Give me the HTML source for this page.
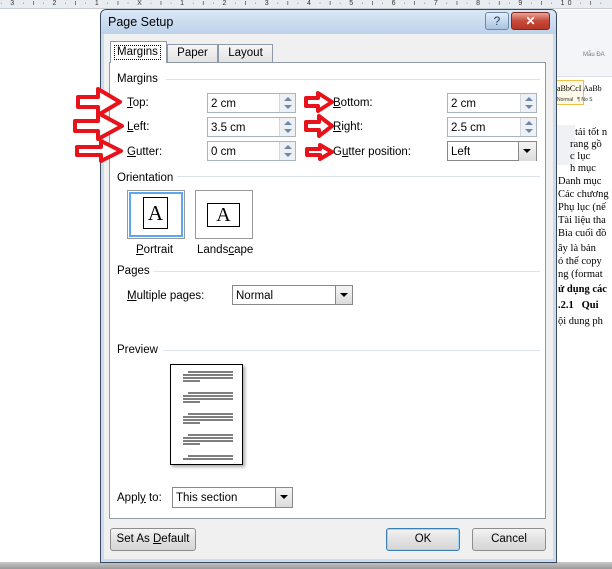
<!DOCTYPE html>
<html><head><meta charset="utf-8"><style>
*{margin:0;padding:0;box-sizing:border-box}
body{width:612px;height:569px;position:relative;overflow:hidden;background:#fff;font-family:"Liberation Sans",sans-serif;font-size:11px;color:#000}
.a{position:absolute}
.lbl{position:absolute;font-size:11.5px;line-height:14px}
.inp{position:absolute;background:#fff;border:1px solid #a9b4c2;height:20px;font-size:11.5px;line-height:19px;padding-left:3px;padding-top:1px}
.spin{position:absolute;right:0;top:0;width:16px;height:18px;background:#eef0f3;border-left:1px solid #d0d6dd}
.spin:before{content:"";position:absolute;left:4px;top:3px;border:4px solid transparent;border-bottom:4px solid #6a86a8;border-top:0}
.spin:after{content:"";position:absolute;left:4px;top:11px;border:4px solid transparent;border-top:4px solid #6a86a8;border-bottom:0}
.dd{position:absolute;right:0;top:0;width:17px;height:18px;background:linear-gradient(#f4f4f4,#dcdcdc);border-left:1px solid #888}
.dd:after{content:"";position:absolute;left:4px;top:7px;border:4px solid transparent;border-top:4px solid #000;border-bottom:0}
.sep{position:absolute;height:1px;background:#dde3ea}
.btn{position:absolute;height:23px;border:1px solid #8d8d8d;border-radius:3px;background:linear-gradient(#f4f4f4,#e2e2e2 50%,#d6d6d6);font-size:11.5px;line-height:21px;text-align:center}
.arrow{position:absolute}
u{text-decoration:underline}
.doc{position:absolute;left:558px;font-family:"Liberation Serif",serif;font-size:10.5px;white-space:nowrap;line-height:12px}
</style></head><body>
<div class="a" style="left:0;top:0;width:612px;height:9px;background:#e9edf2;border-bottom:1px solid #c7ccd3;font-size:7px;color:#333;letter-spacing:3px;white-space:nowrap;line-height:8px;overflow:hidden">· 3 · ı · 2 · ı · 1 · ı · X · ı · 1 · ı · 2 · ı · 3 · ı · 4 · ı · 5 · ı · 6 · ı · 7 · ı · 8 · ı · 9 · ı · 10 · ı ·</div>
<div class="a" style="left:557px;top:10px;width:55px;height:90px;background:#f3f5f8"></div>
<div class="a" style="left:583px;top:52px;font-size:6px;color:#777">Mẫu ĐA</div>
<div class="a" style="left:557px;top:76px;width:55px;height:32px;background:#fff;border-top:1px solid #dde"></div>
<div class="a" style="left:556px;top:80px;width:28px;height:25px;border:1px solid #f0c040;background:#fffbe8"></div>
<div class="a" style="left:557px;top:84px;font-family:'Liberation Serif',serif;font-size:8px">aBbCcI AaBb</div>
<div class="a" style="left:557px;top:97px;font-size:5px;color:#333">Normal &nbsp; ¶ No S</div>
<div class="a" style="left:557px;top:112px;width:55px;height:450px;background:#fff"></div>
<div class="a" style="left:557px;top:125px;width:18px;height:40px;background:#f0f1f4"></div>
<div class="doc" style="top:127px;left:575px">tải tốt n</div>
<div class="doc" style="top:139px;left:570px">rang gồ</div>
<div class="doc" style="top:151px;left:570px">c lục</div>
<div class="doc" style="top:163px;left:570px">h mục</div>
<div class="doc" style="top:176px">Danh mục</div>
<div class="doc" style="top:189px">Các chương</div>
<div class="doc" style="top:202px">Phụ lục (nế</div>
<div class="doc" style="top:215px">Tài liệu tha</div>
<div class="doc" style="top:228px">Bìa cuối đồ</div>
<div class="doc" style="top:243px">ây là bản</div>
<div class="doc" style="top:256px">ó thể copy</div>
<div class="doc" style="top:269px">ng (format</div>
<div class="doc" style="top:284px;font-weight:bold">ử dụng các</div>
<div class="doc" style="top:300px;font-weight:bold">.2.1 &nbsp; Qui</div>
<div class="doc" style="top:316px">ội dung ph</div>
<div class="a" style="left:0;top:562px;width:612px;height:7px;background:linear-gradient(#c8c8c8,#9a9a9a)"></div>
<div class="a" style="left:100px;top:9px;width:457px;height:554px;background:#c9dcf0;border:1px solid #3a4a5c;border-radius:6px 6px 0 0"></div>
<div class="a" style="left:101px;top:10px;width:455px;height:24px;background:linear-gradient(#dbe8f6,#bcd2ea);border-radius:5px 5px 0 0"></div>
<div class="a" style="left:108px;top:15px;font-size:12.5px">Page Setup</div>
<div class="a" style="left:485px;top:12px;width:24px;height:18px;border:1px solid #6d88a8;border-radius:3px;background:linear-gradient(#e4eef9,#a9c3e0);text-align:center;font-size:12px;line-height:16px;color:#2a3f5a">?</div>
<div class="a" style="left:511px;top:12px;width:39px;height:18px;border:1px solid #7a2c24;border-radius:3px;background:linear-gradient(#e9a496,#c6493a 50%,#b83624);text-align:center;font-size:12px;line-height:16px;color:#fff;font-weight:bold">✕</div>
<div class="a" style="left:104px;top:34px;width:449px;height:525px;background:#f0f0f0"></div>
<div class="a" style="left:109px;top:62px;width:437px;height:457px;background:#fff;border:1px solid #8e9aa8"></div>
<div class="a" style="left:110px;top:41px;width:57px;height:22px;background:#fff;border:1px solid #8e9aa8;border-bottom:none"></div>
<div class="a" style="left:114px;top:45px;border:1px dotted #000;padding:0 2px;font-size:11.5px;line-height:13px">Margins</div>
<div class="a" style="left:167px;top:44px;width:51px;height:19px;background:linear-gradient(#f6f6f6,#e2e2e2);border:1px solid #8e9aa8;text-align:center;font-size:11.5px;line-height:17px">Paper</div>
<div class="a" style="left:218px;top:44px;width:55px;height:19px;background:linear-gradient(#f6f6f6,#e2e2e2);border:1px solid #8e9aa8;text-align:center;font-size:11.5px;line-height:17px">Layout</div>
<div class="lbl" style="left:117px;top:72px">Margins</div><div class="sep" style="left:166px;top:79px;width:374px"></div>
<div class="lbl" style="left:127px;top:96px"><u>T</u>op:</div>
<div class="inp" style="left:207px;top:93px;width:89px">2 cm<div class="spin"></div></div>
<div class="lbl" style="left:127px;top:120px"><u>L</u>eft:</div>
<div class="inp" style="left:207px;top:117px;width:89px">3.5 cm<div class="spin"></div></div>
<div class="lbl" style="left:127px;top:145px"><u>G</u>utter:</div>
<div class="inp" style="left:207px;top:141px;width:89px">0 cm<div class="spin"></div></div>
<div class="lbl" style="left:333px;top:96px"><u>B</u>ottom:</div>
<div class="inp" style="left:447px;top:93px;width:90px">2 cm<div class="spin"></div></div>
<div class="lbl" style="left:333px;top:120px"><u>R</u>ight:</div>
<div class="inp" style="left:447px;top:117px;width:90px">2.5 cm<div class="spin"></div></div>
<div class="lbl" style="left:333px;top:145px">G<u>u</u>tter position:</div>
<div class="inp" style="left:447px;top:141px;width:90px;border-color:#888">Left<div class="dd" style="width:18px;height:19px"></div></div>
<div class="sep" style="left:117px;top:176px;width:423px"></div>
<div class="lbl" style="left:117px;top:171px;background:#fff;padding-right:4px">Orientation</div>
<div class="a" style="left:127px;top:190px;width:58px;height:49px;border:1px solid #999;background:#fff"><div style="position:absolute;inset:1px;border:2px solid #5aa8f0"></div>
<div style="position:absolute;left:15px;top:6px;width:25px;height:32px;border:1px solid #000;background:#fff;font-family:'Liberation Serif',serif;font-size:21px;text-align:center;line-height:30px">A</div></div>
<div class="a" style="left:195px;top:190px;width:58px;height:49px;border:1px solid #999;background:#fff">
<div style="position:absolute;left:11px;top:12px;width:33px;height:24px;border:1px solid #000;background:#fff;font-family:'Liberation Serif',serif;font-size:20px;text-align:center;line-height:22px">A</div></div>
<div class="lbl" style="left:136px;top:243px"><u>P</u>ortrait</div>
<div class="lbl" style="left:197px;top:243px">Lands<u>c</u>ape</div>
<div class="lbl" style="left:117px;top:264px">Pages</div><div class="sep" style="left:154px;top:271px;width:386px"></div>
<div class="lbl" style="left:127px;top:289px"><u>M</u>ultiple pages:</div>
<div class="inp" style="left:232px;top:285px;width:121px;border-color:#888">Normal<div class="dd"></div></div>
<div class="lbl" style="left:117px;top:343px">Preview</div><div class="sep" style="left:163px;top:350px;width:377px"></div>
<div class="a" style="left:170px;top:364px;width:73px;height:101px;border:1px solid #000;background:#fff;box-shadow:2px 2px 3px #aaa">
<svg width="71" height="99" style="position:absolute;left:0;top:0">
<g stroke="#333" stroke-width="1.2">
<path d="M17 7H62M12 10H62M12 13H62M12 16H29"/>
<path d="M17 28H62M12 31H62M12 34H62M12 37H29"/>
<path d="M17 49H62M12 52H62M12 55H62M12 58H29"/>
<path d="M17 70H62M12 73H62M12 76H62M12 79H29"/>
<path d="M17 91H62M12 94H62"/>
</g></svg></div>
<div class="lbl" style="left:117px;top:491px">Appl<u>y</u> to:</div>
<div class="inp" style="left:172px;top:487px;width:121px;border-color:#888;height:21px">This section<div class="dd" style="height:19px"></div></div>
<div class="btn" style="left:110px;top:528px;width:86px">Set As <u>D</u>efault</div>
<div class="btn" style="left:386px;top:528px;width:74px;border-color:#3c7fb1;box-shadow:inset 0 0 0 1px #9fd5f5">OK</div>
<div class="btn" style="left:472px;top:528px;width:74px">Cancel</div>
<svg class="arrow" style="left:0;top:0" width="612" height="569">
<g fill="#fff" stroke="#e8121b" stroke-width="4" stroke-linejoin="round">
<path d="M78 97h20v-8l22 13l-22 13v-8h-20z"/>
<path d="M75 121h23v-8l24 13l-24 13v-8h-23z"/>
<path d="M77 147h24v-6l20 10l-20 10v-6h-24z"/>
<path d="M306 98h12v-5l14 9l-14 9v-5h-12z"/>
<path d="M306 122h13v-6l13 10l-13 10v-6h-13z"/>
<path d="M307 149h13v-4l12 7l-12 7v-4h-13z"/>
</g></svg>
</body></html>
